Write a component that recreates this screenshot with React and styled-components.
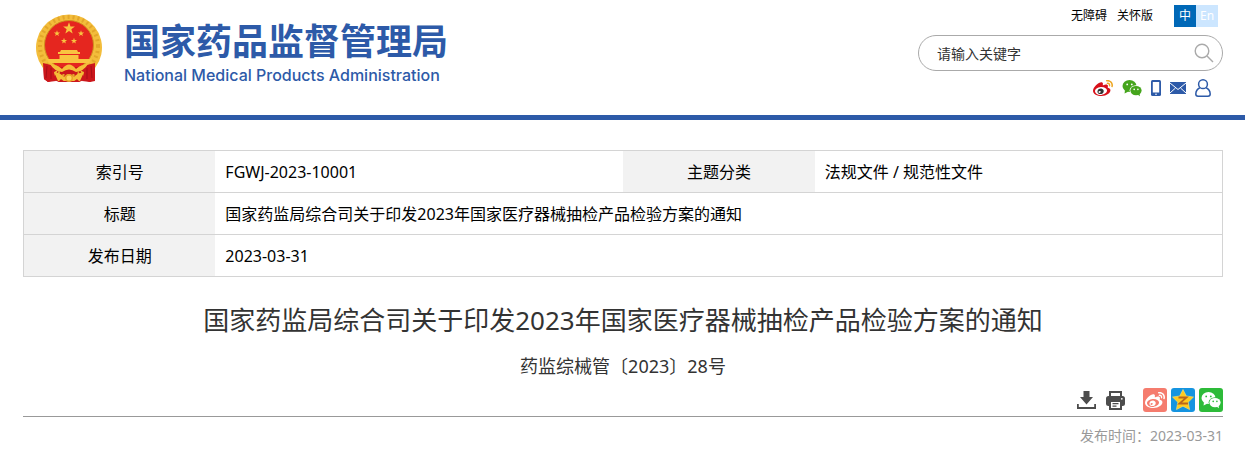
import React from 'react';
import styled, { createGlobalStyle } from 'styled-components';

const GlobalStyle = createGlobalStyle`
  * {
    box-sizing: border-box;
  }

  body {
    margin: 0;
    background: #fff;
    color: #000;
    font-family: 'Noto Sans', 'Noto Sans CJK SC', sans-serif;
    font-size: 16px;
  }

  a {
    color: inherit;
    text-decoration: none;
  }

  svg {
    display: block;
  }
`;

const Header = styled.header`
  display: flex;
  justify-content: space-between;
  align-items: flex-start;
  padding: 5px 22px 18px 34px;
  border-bottom: 5px solid #2d5aa8;
`;

const Brand = styled.a`
  display: flex;
  align-items: flex-start;
  gap: 20px;
  padding-top: 6px;
  color: #2d5aa8;
`;

const BrandText = styled.span`
  display: flex;
  flex-direction: column;
  gap: 2px;
  padding-top: 6px;
`;

const BrandName = styled.span`
  font-family: 'Noto Sans CJK SC', sans-serif;
  font-size: 36px;
  font-weight: 700;
  line-height: 44px;
`;

const BrandEnglish = styled.span`
  font-family: Inter, sans-serif;
  font-size: 16px;
  font-weight: 500;
  line-height: 24px;
`;

const Tools = styled.div`
  display: flex;
  flex-direction: column;
  align-items: flex-end;
  gap: 8px;
`;

const TopLinks = styled.nav`
  display: flex;
  align-items: center;
  gap: 10px;
  padding-right: 5px;
  font-size: 12px;
  line-height: 22px;
`;

const Languages = styled.div`
  display: flex;
  margin-left: 11px;
`;

const Language = styled.a`
  width: 22px;
  text-align: center;
  color: #fff;
  background: ${(props) => (props.$active ? '#0068b7' : '#cce6ff')};
`;

const SearchForm = styled.form`
  display: flex;
  align-items: center;
  width: 305px;
  height: 36px;
  padding: 0 8px 0 18px;
  border: 1px solid #aaa;
  border-radius: 18px;
`;

const SearchInput = styled.input`
  flex: 1;
  min-width: 0;
  padding: 0;
  border: 0;
  outline: 0;
  background: none;
  font-family: inherit;
  font-size: 14px;

  &::placeholder {
    color: #333;
    opacity: 1;
  }
`;

const IconButton = styled.button`
  padding: 0;
  border: 0;
  background: none;
  cursor: pointer;
`;

const SocialLinks = styled.nav`
  display: flex;
  align-items: center;
  gap: 9px;
  height: 18px;
  padding-right: 12px;
`;

const Content = styled.main`
  padding: 30px 22px 0 23px;
`;

const InfoTable = styled.table`
  width: 100%;
  table-layout: fixed;
  border-collapse: collapse;
  border: 1px solid #d4d4d4;
`;

const InfoRow = styled.tr`
  height: 42px;
  border-bottom: 1px solid #d4d4d4;
`;

const InfoLabel = styled.th`
  padding: 0;
  background: #f2f2f2;
  font-weight: 400;
  line-height: 24px;
`;

const InfoValue = styled.td`
  padding: 0 10px;
  line-height: 24px;
`;

const Title = styled.h1`
  margin: 24px 0 0;
  color: #333;
  font-size: 26px;
  font-weight: 400;
  line-height: 38px;
  text-align: center;
`;

const DocNumber = styled.p`
  margin: 14px 0 0;
  color: #333;
  font-size: 18px;
  line-height: 26px;
  text-align: center;
`;

const Actions = styled.div`
  display: flex;
  justify-content: flex-end;
  align-items: center;
  gap: 4px;
  margin-top: 9px;
  padding-bottom: 4px;
  border-bottom: 1px solid #999;
`;

const PageActions = styled.div`
  display: flex;
  align-items: center;
  gap: 10px;
  margin-right: 14px;
`;

const PublishTime = styled.p`
  margin: 9px 0 0;
  color: #999;
  font-size: 14px;
  line-height: 20px;
  text-align: right;
`;

const STAR = 'M0 -10 L2.4 -3.2 L9.5 -3.1 L3.8 1.2 L5.9 8.1 L0 4 L-5.9 8.1 L-3.8 1.2 L-9.5 -3.1 L-2.4 -3.2 Z';
const WIDE_STAR = 'M0 -10.5 L3.3 -4 L10.5 -3 L5.2 2.2 L6.6 9.6 L0 6.2 L-6.6 9.6 L-5.2 2.2 L-10.5 -3 L-3.3 -4 Z';

const Emblem = () => (
  <svg width="70" height="72" viewBox="0 0 70 72" aria-hidden="true">
    <path d="M9 50 H61 V70 L56 71 L50 69 L45 71 H25 L20 69 L14 71 L10 68 Z" fill="#cc171c" />
    <path d="M20 66 A33 33 0 1 1 50 66 L44 56 H26 Z" fill="#f3bd3b" />
    <circle cx="35" cy="35" r="29" fill="none" stroke="#e3a62a" strokeWidth="4" strokeDasharray="2 3" />
    <circle cx="35" cy="34" r="24.5" fill="#e5261f" stroke="#d0901f" strokeWidth="1" />
    <g fill="#f9c440">
      <path d={STAR} transform="translate(35 17.5) scale(.62)" />
      <path d={STAR} transform="translate(23 22.5) scale(.32)" />
      <path d={STAR} transform="translate(47 22.5) scale(.32)" />
      <path d={STAR} transform="translate(30 30) scale(.32)" />
      <path d={STAR} transform="translate(40 30) scale(.32)" />
      <path d="M27 39 H43 L44 41 H46 V43 H24 V41 H26 Z M25.5 44 H44.5 V48 H57 L55 52 H15 L13 48 H25.5 Z" />
    </g>
    <path d="M9 52 L17 54 L26 58 L20 61 L22 70 L14 71 L10 68 Z M61 52 L53 54 L44 58 L50 61 L48 70 L56 71 L61 68 Z" fill="#cc171c" />
    <path d="M24 56 H46 L43 63 H27 Z" fill="#cc171c" />
    <path d="M16 53 Q24 54 28 58 Q35 49 42 58 Q46 54 54 53 Q50 60 42 61 Q35 56 28 61 Q20 60 16 53 Z" fill="#f5be38" />
    <path d="M13 55 L12 67 M17 57 L17 68 M57 55 L58 67 M53 57 L53 68" stroke="#a90f16" strokeWidth="1" />
    <path d="M20 61 Q27 62 30 66 Q35 60 40 66 Q43 62 50 61 L46 70 H24 Z" fill="#f5be38" />
    <circle cx="35" cy="67" r="4" fill="#e8a428" />
    <circle cx="35" cy="67" r="2.5" fill="#ffd55c" />
    <path d="M27 68 L31 71 H24 Z M43 68 L39 71 H46 Z" fill="#cc171c" />
  </svg>
);

const WeiboIcon = ({ size, face, eye, waves }) => (
  <svg width={size} height={size} viewBox="0 0 512 480" aria-hidden="true">
    <path fill={face} d="M214.8 446.7C108.5 446.7 0 395.3 0 310.4c0-44.3 28-95.4 76.3-143.7C176 67 279.5 65.8 249.9 161c-4 13.1 12.3 5.7 12.3 6 79.5-33.6 140.5-16.8 114 51.4-3.7 9.4 1.1 10.9 8.3 13.1 135.7 42.3 34.8 215.2-169.7 215.2zm143.7-146.3c-5.4-55.7-78.5-94-163.4-85.7-84.8 8.6-148.8 60.3-143.4 116s78.5 94 163.4 85.7c84.8-8.6 148.8-60.3 143.4-116z" />
    <path fill={eye} d="M269.4 346.1c-17.1 38.8-66.8 60-109.1 46.3-40.8-13.1-58-53.4-40.3-89.7 17.7-35.4 63.1-55.4 103.4-45.1 42 10.8 63.1 50.2 46 88.5zm-86.3-30c-12.9-5.4-30 .3-38 12.9-8.3 12.9-4.3 28 8.6 34 13.1 6 30.8.3 39.1-12.9 8-13.1 3.7-28.3-9.7-34z" />
    <path fill={waves} d="M407 177.6c7.6-24-13.4-46.8-37.4-41.7-22 4.8-28.8-28.1-7.1-32.8 50.1-10.9 92.3 37.1 76.5 84.8-6.8 21.2-38.8 10.8-32-10.3zM347.9 35.1c-25.9 5.6-16.8 43.7 8.3 38.3 72.3-15.2 134.8 52.8 111.7 124-7.4 24.2 29.1 37 37.4 12 31.9-99.8-55.1-195.9-157.4-174.3z" />
  </svg>
);

const WechatIcon = ({ size, fill, gap }) => (
  <svg width={size} height={size} viewBox="0 0 20 20" aria-hidden="true">
    <path fill={fill} d="M3 12 L2.6 15.5 L6.5 13.5 Z" />
    <ellipse cx="7.5" cy="8" rx="7" ry="6" fill={fill} />
    <ellipse cx="14" cy="12.6" rx="6.4" ry="5.4" fill={gap} />
    <ellipse cx="14" cy="12.6" rx="5.6" ry="4.7" fill={fill} />
    <path fill={fill} d="M15.5 16.5 L18 18.3 L17.5 15.5 Z" />
    <g fill={gap}>
      <circle cx="5.2" cy="6.4" r="0.9" />
      <circle cx="9.8" cy="6.4" r="0.9" />
      <circle cx="12.2" cy="11.4" r="0.8" />
      <circle cx="15.9" cy="11.4" r="0.8" />
    </g>
  </svg>
);

const SearchIcon = () => (
  <svg width="20" height="20" viewBox="0 0 20 20" fill="none" stroke="#aaa" strokeWidth="1.4" aria-hidden="true">
    <circle cx="8" cy="8" r="6.8" />
    <path d="M13 13 L19 19" />
  </svg>
);

const PhoneIcon = () => (
  <svg width="10" height="16" viewBox="0 0 10 16" aria-hidden="true">
    <rect width="10" height="16" rx="1.5" fill="#2d5aa8" />
    <rect x="1.8" y="2" width="6.4" height="10.5" fill="#fff" />
    <circle cx="5" cy="14.2" r="0.8" fill="#fff" />
  </svg>
);

const MailIcon = () => (
  <svg width="16" height="12" viewBox="0 0 16 12" aria-hidden="true">
    <rect width="16" height="12" fill="#2d5aa8" />
    <path d="M0 1 L8 7.5 L16 1 M0 11 L5.5 6 M16 11 L10.5 6" fill="none" stroke="#fff" strokeWidth="1" />
  </svg>
);

const UserIcon = () => (
  <svg width="16" height="18" viewBox="0 0 16 18" fill="none" stroke="#2d5aa8" strokeWidth="1.5" aria-hidden="true">
    <circle cx="8" cy="5.2" r="4.4" />
    <path d="M4.8 8.8 Q1 10.5 0.8 15 Q0.8 17.2 3 17.2 H13 Q15.2 17.2 15.2 15 Q15 10.5 11.2 8.8" />
  </svg>
);

const DownloadIcon = () => (
  <svg width="19" height="18" viewBox="0 0 19 18" fill="#4d4d4d" aria-hidden="true">
    <path d="M6.5 0 H12.5 V6 H16 L9.5 13.5 L3 6 H6.5 Z" />
    <path d="M0 13 H1.8 V16 H17.2 V13 H19 V18 H0 Z" />
  </svg>
);

const PrintIcon = () => (
  <svg width="19" height="19" viewBox="0 0 19 19" aria-hidden="true">
    <path d="M4 6 V1 H15 V6" fill="none" stroke="#4d4d4d" strokeWidth="2" />
    <rect y="5" width="19" height="10" rx="2.5" fill="#4d4d4d" />
    <rect x="4" y="10" width="11" height="8" fill="#fff" stroke="#4d4d4d" strokeWidth="2" />
    <path d="M6.5 12.7 h6 M6.5 15.2 h4" stroke="#4d4d4d" strokeWidth="1.2" />
    <circle cx="15.8" cy="7.8" r="0.9" fill="#fff" />
  </svg>
);

const ShareLink = styled.a`
  display: flex;
  align-items: center;
  justify-content: center;
  width: 24px;
  height: 24px;
  border-radius: 3px;
  background: ${(props) => props.$color};
`;

const QzoneIcon = () => (
  <svg width="22" height="22" viewBox="-11 -11 22 22" aria-hidden="true">
    <path d={WIDE_STAR} fill="#ffcb1f" stroke="#f5e07a" strokeWidth="0.6" strokeLinejoin="round" />
    <path d="M-4.5 -2.5 H3.5 L-3.5 3.5 H5" fill="none" stroke="#b9661c" strokeWidth="1.8" />
  </svg>
);

const App = () => {
  return (
    <>
      <GlobalStyle />
      <Header>
        <Brand href="#">
          <Emblem />
          <BrandText>
            <BrandName>国家药品监督管理局</BrandName>
            <BrandEnglish>National Medical Products Administration</BrandEnglish>
          </BrandText>
        </Brand>
        <Tools>
          <TopLinks>
            <a href="#">无障碍</a>
            <a href="#">关怀版</a>
            <Languages>
              <Language href="#" $active>中</Language>
              <Language href="#">En</Language>
            </Languages>
          </TopLinks>
          <SearchForm>
            <SearchInput type="text" placeholder="请输入关键字" aria-label="请输入关键字" />
            <IconButton type="button" aria-label="搜索"><SearchIcon /></IconButton>
          </SearchForm>
          <SocialLinks>
            <a href="#" aria-label="微博"><WeiboIcon size={20} face="#d8101a" eye="#333" waves="#eda621" /></a>
            <a href="#" aria-label="微信"><WechatIcon size={20} fill="#45a51c" gap="#fff" /></a>
            <a href="#" aria-label="手机"><PhoneIcon /></a>
            <a href="#" aria-label="邮箱"><MailIcon /></a>
            <a href="#" aria-label="用户"><UserIcon /></a>
          </SocialLinks>
        </Tools>
      </Header>
      <Content>
        <InfoTable>
          <colgroup>
            <col width="16%" />
            <col width="34%" />
            <col width="16%" />
            <col width="34%" />
          </colgroup>
          <tbody>
            <InfoRow>
              <InfoLabel scope="row">索引号</InfoLabel>
              <InfoValue>FGWJ-2023-10001</InfoValue>
              <InfoLabel scope="row">主题分类</InfoLabel>
              <InfoValue>法规文件 / 规范性文件</InfoValue>
            </InfoRow>
            <InfoRow>
              <InfoLabel scope="row">标题</InfoLabel>
              <InfoValue colSpan={3}>国家药监局综合司关于印发2023年国家医疗器械抽检产品检验方案的通知</InfoValue>
            </InfoRow>
            <InfoRow>
              <InfoLabel scope="row">发布日期</InfoLabel>
              <InfoValue colSpan={3}>2023-03-31</InfoValue>
            </InfoRow>
          </tbody>
        </InfoTable>
        <Title>国家药监局综合司关于印发2023年国家医疗器械抽检产品检验方案的通知</Title>
        <DocNumber>药监综械管〔2023〕28号</DocNumber>
        <Actions>
          <PageActions>
            <IconButton type="button" aria-label="下载"><DownloadIcon /></IconButton>
            <IconButton type="button" aria-label="打印"><PrintIcon /></IconButton>
          </PageActions>
          <ShareLink href="#" $color="#f57c6e" aria-label="分享到微博">
            <WeiboIcon size={20} face="#fff" eye="#fff" waves="#fff" />
          </ShareLink>
          <ShareLink href="#" $color="#1594e0" aria-label="分享到QQ空间">
            <QzoneIcon />
          </ShareLink>
          <ShareLink href="#" $color="#2dbb39" aria-label="分享到微信">
            <WechatIcon size={20} fill="#fff" gap="#2dbb39" />
          </ShareLink>
        </Actions>
        <PublishTime>发布时间：2023-03-31</PublishTime>
      </Content>
    </>
  );
};

export default App;
